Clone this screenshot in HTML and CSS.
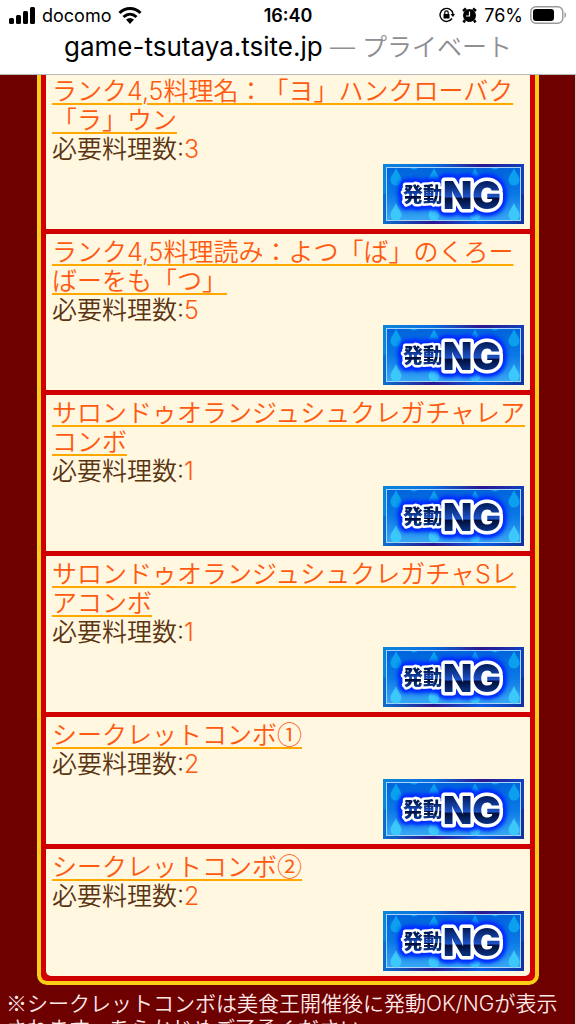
FILE: index.html
```
<!DOCTYPE html>
<html lang="ja">
<head>
  <meta charset="UTF-8">
  <meta name="viewport" content="width=device-width, initial-scale=1">
  <title>コンボ一覧</title>
  <link rel="stylesheet" href="styles.css">
</head>
<body>

<!-- Shared badge artwork -->
<svg class="defs" aria-hidden="true">
  <defs>
    <linearGradient id="frame" x1="0" y1="0" x2="1" y2="0">
      <stop offset="0" stop-color="#0a86dc"/>
      <stop offset="0.35" stop-color="#0a6ee0"/>
      <stop offset="0.7" stop-color="#2a1690"/>
      <stop offset="1" stop-color="#1040c0"/>
    </linearGradient>
    <linearGradient id="frameBottom" x1="0" y1="0" x2="1" y2="0">
      <stop offset="0" stop-color="#0a70d0"/>
      <stop offset="0.35" stop-color="#2a1690"/>
      <stop offset="0.7" stop-color="#0a5ce0"/>
      <stop offset="1" stop-color="#1030a0"/>
    </linearGradient>
    <linearGradient id="water" x1="0" y1="0" x2="0" y2="1">
      <stop offset="0" stop-color="#0064dc"/>
      <stop offset="0.5" stop-color="#0a78e6"/>
      <stop offset="1" stop-color="#38a8f4"/>
    </linearGradient>
    <linearGradient id="ink" x1="0" y1="0" x2="0" y2="1">
      <stop offset="0.2" stop-color="#001a58"/>
      <stop offset="0.55" stop-color="#1f56cc"/>
      <stop offset="0.56" stop-color="#000c38"/>
      <stop offset="0.85" stop-color="#0b3b94"/>
    </linearGradient>
    <path id="drop" d="M0 0C2 5 5.500 8 5.500 12A5.500 5.500 0 0 1 -5.500 12C-5.500 8 -2 5 0 0Z"/>
    <clipPath id="waterClip"><rect x="4" y="4" width="133" height="52"/></clipPath>
    <g id="badgeBg">
      <rect width="141" height="31" fill="url(#frame)"/>
      <rect y="30" width="141" height="30" fill="url(#frameBottom)"/>
      <rect x="3.500" y="3.500" width="134" height="53" fill="url(#water)" stroke="#a8d4fa"/>
      <g fill="#0aa0ee" clip-path="url(#waterClip)">
        <use href="#drop" x="13" y="4"/>
        <use href="#drop" x="51" y="4"/>
        <use href="#drop" x="92" y="4"/>
        <use href="#drop" x="131" y="4"/>
        <use href="#drop" x="31" y="-12"/>
        <use href="#drop" x="112" y="-12"/>
      </g>
      <g fill="#3cc8fa">
        <use href="#drop" x="13" y="39"/>
        <use href="#drop" x="51" y="39"/>
        <use href="#drop" x="92" y="39"/>
        <use href="#drop" x="131" y="39"/>
      </g>
    </g>
  </defs>
</svg>

<header class="browser-bar">
  <div class="status">
    <div class="status-left">
      <svg class="signal" width="26" height="17" viewBox="0 0 26 17" aria-hidden="true">
        <rect x="0" y="11" width="5" height="6" rx="1.500"/>
        <rect x="7" y="8" width="5" height="9" rx="1.500"/>
        <rect x="14" y="4" width="5" height="13" rx="1.500"/>
        <rect x="21" y="0" width="5" height="17" rx="1.500"/>
      </svg>
      <span>docomo</span>
      <svg width="24" height="17" viewBox="0 0 24 17" aria-hidden="true">
        <g fill="none" stroke="#000" stroke-width="3">
          <path d="M1.500 6C7.500 0 16.500 0 22.500 6"/>
          <path d="M5.500 10C9.500 6.200 14.500 6.200 18.500 10"/>
        </g>
        <path d="M8 12.500C10.500 10.500 13.500 10.500 16 12.500L12 17Z"/>
      </svg>
    </div>
    <span class="clock">16:40</span>
    <div class="status-right">
      <svg width="16" height="16" viewBox="0 0 16 16" aria-hidden="true">
        <path d="M13 11.500A6.500 6.500 0 1 1 14 7" fill="none" stroke="#000" stroke-width="1.400"/>
        <path d="M11.500 7H16L14 10Z"/>
        <rect x="4.500" y="7" width="6" height="4.500" rx="0.500"/>
        <path d="M5.800 7V5.500a1.700 1.700 0 0 1 3.400 0V7" fill="none" stroke="#000" stroke-width="1.200"/>
      </svg>
      <svg width="15" height="16" viewBox="0 0 15 16" aria-hidden="true">
        <circle cx="7.500" cy="8.500" r="6.500"/>
        <path d="M1 4L4 1.500M14 4L11 1.500M3 13L1.500 15.500M12 13L13.500 15.500" stroke="#000" stroke-width="2.500"/>
        <path d="M7.500 4.500V9H4" fill="none" stroke="#fff" stroke-width="1.200"/>
      </svg>
      <span>76%</span>
      <svg width="37" height="18" viewBox="0 0 37 18" aria-hidden="true">
        <rect x="0.800" y="0.800" width="32" height="16.400" rx="5" fill="none" stroke="#999" stroke-width="1.400"/>
        <rect x="3" y="3" width="21" height="12" rx="3"/>
        <path d="M34.500 6V12C36.500 11 36.500 7 34.500 6Z" fill="#999"/>
      </svg>
    </div>
  </div>
  <div class="address">game-tsutaya.tsite.jp <span class="private">— プライベート</span></div>
</header>

<main>
  <ul class="combo-list">
    <li class="combo">
      <a href="#">ランク4,5料理名：「ヨ」ハンクローバク「ラ」ウン</a>
      <p>必要料理数:<span class="count">3</span></p>
      <svg class="badge" viewBox="0 0 141 60" role="img">
        <use href="#badgeBg"/>
        <g class="badge-text"><text class="kanji" x="20" y="38">発動</text><text class="ng" x="60" y="45">NG</text></g>
      </svg>
    </li>
    <li class="combo">
      <a href="#">ランク4,5料理読み：よつ「ば」のくろーばーをも「つ」</a>
      <p>必要料理数:<span class="count">5</span></p>
      <svg class="badge" viewBox="0 0 141 60" role="img">
        <use href="#badgeBg"/>
        <g class="badge-text"><text class="kanji" x="20" y="38">発動</text><text class="ng" x="60" y="45">NG</text></g>
      </svg>
    </li>
    <li class="combo">
      <a href="#">サロンドゥオランジュシュクレガチャレアコンボ</a>
      <p>必要料理数:<span class="count">1</span></p>
      <svg class="badge" viewBox="0 0 141 60" role="img">
        <use href="#badgeBg"/>
        <g class="badge-text"><text class="kanji" x="20" y="38">発動</text><text class="ng" x="60" y="45">NG</text></g>
      </svg>
    </li>
    <li class="combo">
      <a href="#">サロンドゥオランジュシュクレガチャSレアコンボ</a>
      <p>必要料理数:<span class="count">1</span></p>
      <svg class="badge" viewBox="0 0 141 60" role="img">
        <use href="#badgeBg"/>
        <g class="badge-text"><text class="kanji" x="20" y="38">発動</text><text class="ng" x="60" y="45">NG</text></g>
      </svg>
    </li>
    <li class="combo">
      <a href="#">シークレットコンボ<span class="symbol">①</span></a>
      <p>必要料理数:<span class="count">2</span></p>
      <svg class="badge" viewBox="0 0 141 60" role="img">
        <use href="#badgeBg"/>
        <g class="badge-text"><text class="kanji" x="20" y="38">発動</text><text class="ng" x="60" y="45">NG</text></g>
      </svg>
    </li>
    <li class="combo">
      <a href="#">シークレットコンボ<span class="symbol">②</span></a>
      <p>必要料理数:<span class="count">2</span></p>
      <svg class="badge" viewBox="0 0 141 60" role="img">
        <use href="#badgeBg"/>
        <g class="badge-text"><text class="kanji" x="20" y="38">発動</text><text class="ng" x="60" y="45">NG</text></g>
      </svg>
    </li>
  </ul>
  <p class="note"><span class="symbol">※</span>シークレットコンボは美食王開催後に発動OK/NGが表示されます。あらかじめご了承ください。</p>
</main>

</body>
</html>
```

FILE: styles.css
```
* {
  box-sizing: border-box;
}

body {
  margin: 0;
  background: #6e0000;
  font-family: Inter, "Noto Sans CJK JP", sans-serif;
  font-weight: 350;
  text-spacing-trim: space-all;
}

p, ul {
  margin: 0;
  padding: 0;
}

svg {
  display: block;
}

.defs {
  position: absolute;
  width: 0;
  height: 0;
}

/* Phone status and address */
.browser-bar {
  background: #fff;
  border-bottom: 1px solid #b8b8b8;
  height: 75px;
}

.status {
  display: grid;
  grid-template-columns: 1fr auto 1fr;
  align-items: center;
  height: 30px;
  padding: 0 9px;
  font-size: 18px;
  font-weight: 400;
}

.status-left, .status-right {
  display: flex;
  align-items: center;
  gap: 7px;
}

.status-right {
  justify-content: flex-end;
}

.clock {
  font-weight: 600;
}

.address {
  text-align: center;
  font-size: 26px;
  line-height: 34px;
  font-weight: 400;
}

.private {
  color: #8e8e93;
  font-size: 25px;
  font-weight: 350;
}

/* Combo panel */
main {
  border-right: 1px solid #d8d0d0;
}

.combo-list {
  display: flex;
  flex-direction: column;
  gap: 5px;
  margin: 0 36px 0 37px;
  padding: 0 5px 5px;
  list-style: none;
  background: #d00000;
  border: 4px solid #fdd017;
  border-top: none;
  border-radius: 0 0 10px 10px;
}

.combo {
  padding: 4px 2px 5px 6px;
  background: #fff7e0;
  color: #5a3410;
  font-size: 25px;
  line-height: 29px;
}

.combo:first-child {
  padding-top: 2px;
}

.combo:last-child {
  border-radius: 0 0 5px 5px;
}

.combo a {
  color: #ff5a10;
  text-decoration: underline;
  text-decoration-color: #ffa800;
  text-decoration-thickness: 2px;
  text-underline-offset: 3px;
}

.count {
  color: #ff5a10;
}

/* Inter draws its own wide forms of these signs */
.symbol {
  font-family: "Noto Sans CJK JP", sans-serif;
  line-height: 1;
}

.badge {
  width: 141px;
  height: 60px;
  margin: 0 4px 0 auto;
}

.badge-text {
  fill: url(#ink);
  stroke: #fff;
  stroke-width: 7px;
  stroke-linejoin: round;
  paint-order: stroke;
  font-weight: 900;
  filter: drop-shadow(0 0 1px #0030ff) drop-shadow(0 0 1px #0030ff) drop-shadow(0 0 2px #0030ff) drop-shadow(0 0 2px #0030ff) drop-shadow(0 0 1px #0030ff);
}

.kanji {
  font-size: 20px;
  stroke-width: 5px;
}

.ng {
  font-size: 38px;
}

.note {
  padding: 6px 6px 0;
  color: #ffe8e8;
  font-size: 21px;
  line-height: 25px;
}
```
